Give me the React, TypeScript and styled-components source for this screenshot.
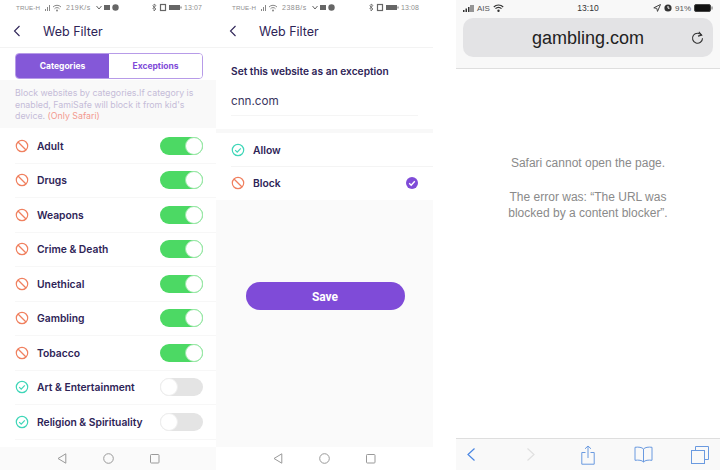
import React from "react";
import styled, { createGlobalStyle } from "styled-components";

const filters = [
  { name: "Adult", on: true },
  { name: "Drugs", on: true },
  { name: "Weapons", on: true },
  { name: "Crime & Death", on: true },
  { name: "Unethical", on: true },
  { name: "Gambling", on: true },
  { name: "Tobacco", on: true },
  { name: "Art & Entertainment", on: false },
  { name: "Religion & Spirituality", on: false },
];

const BlockIcon = () => (
  <svg width="14" height="14" viewBox="0 0 14 14" fill="none" stroke="#f0805f" strokeWidth="1.2">
    <circle cx="7" cy="7" r="5.7" />
    <path d="M3 3l8 8" />
  </svg>
);

const AllowIcon = () => (
  <svg width="14" height="14" viewBox="0 0 14 14" fill="none" stroke="#3fd6b8" strokeWidth="1.2">
    <circle cx="7" cy="7" r="5.7" />
    <path d="M4.2 7.2l2 2 3.6-3.8" />
  </svg>
);

const StatusBar = ({ speed, time }: { speed: string; time: string }) => (
  <Status>
    <span>TRUE-H</span>
    <svg width="17" height="8" viewBox="0 0 17 8" fill="#888">
      <path d="M0 7h1V5H0zM2 7h1V3H2zM4 7h1V1H4z" />
      <path d="M8 3a5.500 5.500 0 0 1 8 0M9.500 4.800a3.200 3.200 0 0 1 5 0" fill="none" stroke="#888" />
      <circle cx="12" cy="6.500" r="1" />
    </svg>
    <Speed>{speed}</Speed>
    <svg width="23" height="7" viewBox="0 0 23 7" fill="#666">
      <path d="M.5 2l2.500 3 2.500-3" fill="none" stroke="#666" />
      <rect x="8" y="1" width="6" height="5" />
      <circle cx="19.500" cy="3.500" r="3.200" />
    </svg>
    <StatusRight>
      <svg width="30" height="9" viewBox="0 0 30 9" fill="none" stroke="#666">
        <path d="M.5 2.500l3.500 3.500L2 8V1l2 1.500L.5 6" strokeWidth=".8" />
        <rect x="8.500" y="1.500" width="5" height="6" strokeWidth="1.200" />
        <rect x="17" y="2" width="11" height="5" fill="#666" stroke="none" />
        <rect x="28.500" y="3.500" width="1" height="2" fill="#666" stroke="none" />
      </svg>
      <span>{time}</span>
    </StatusRight>
  </Status>
);

const Header = () => (
  <HeaderBar>
    <svg width="8" height="12" viewBox="0 0 8 12" fill="none" stroke="#2e2457" strokeWidth="1.1">
      <path d="M6.500 1L1.500 6l5 5" />
    </svg>
    <Title>Web Filter</Title>
  </HeaderBar>
);

const AndroidNav = ({ tinted }: { tinted?: boolean }) => (
  <Nav $tinted={tinted}>
    <svg width="10" height="11" viewBox="0 0 10 11" fill="none" stroke="#999">
      <path d="M8.800 .8v9.400L1 5.500z" />
    </svg>
    <svg width="11" height="11" viewBox="0 0 11 11" fill="none" stroke="#999">
      <circle cx="5.500" cy="5.500" r="4.800" />
    </svg>
    <svg width="10" height="10" viewBox="0 0 10 10" fill="none" stroke="#999">
      <rect x=".5" y=".5" width="8.500" height="8.500" rx=".8" />
    </svg>
  </Nav>
);

export default function App() {
  return (
    <Page>
      <GlobalStyle />
      <Phone>
        <StatusBar speed="219K/s" time="13:07" />
        <Header />
        <Tabs>
          <Tab $active>Categories</Tab>
          <Tab>Exceptions</Tab>
        </Tabs>
        <Notice>
          Block websites by categories.If category is enabled, FamiSafe will block it from kid's
          device. <Red>(Only Safari)</Red>
        </Notice>
        <List>
          {filters.map((f) => (
            <FilterRow key={f.name}>
              {f.on ? <BlockIcon /> : <AllowIcon />}
              <RowLabel>{f.name}</RowLabel>
              <Switch $on={f.on}>
                <Knob $on={f.on} />
              </Switch>
            </FilterRow>
          ))}
        </List>
        <AndroidNav tinted />
      </Phone>

      <Phone $wide>
        <StatusBar speed="238B/s" time="13:08" />
        <Header />
        <FormTitle>Set this website as an exception</FormTitle>
        <Site>cnn.com</Site>
        <Band />
        <ChoiceRow>
          <AllowIcon />
          <RowLabel>Allow</RowLabel>
        </ChoiceRow>
        <ChoiceRow $last>
          <BlockIcon />
          <RowLabel>Block</RowLabel>
          <svg width="12" height="12" viewBox="0 0 12 12">
            <circle cx="6" cy="6" r="6" fill="#7f4bd8" />
            <path d="M3.200 6.200l2 2 3.600-4" fill="none" stroke="#fff" strokeWidth="1.400" />
          </svg>
        </ChoiceRow>
        <SaveArea>
          <SaveButton>Save</SaveButton>
        </SaveArea>
        <AndroidNav />
      </Phone>

      <Safari>
        <SafariTop>
          <IosStatus>
            <IosSide>
              <svg width="11" height="7" viewBox="0 0 11 7" fill="#333">
                <path d="M0 5h1.500v2H0zM2.500 3.500H4V7H2.500zM5 2h1.500v5H5zM7.500 0h1v7h-1zM9.500 0h1v7h-1z" />
              </svg>
              AIS
              <svg width="11" height="8" viewBox="0 0 11 8" fill="none" stroke="#333" strokeWidth="1.200">
                <path d="M.8 3a6.500 6.500 0 0 1 9.400 0M2.500 4.700a4 4 0 0 1 6 0" />
                <circle cx="5.500" cy="6.800" r=".6" fill="#333" />
              </svg>
            </IosSide>
            <IosTime>13:10</IosTime>
            <IosSide $right>
              <svg width="8" height="8" viewBox="0 0 8 8" fill="none" stroke="#444">
                <path d="M7.500.5L.8 3.800l3 .6.700 3z" />
              </svg>
              <svg width="8" height="8" viewBox="0 0 8 8">
                <circle cx="4" cy="4" r="3.600" fill="#333" />
                <path d="M4 2v2.200h1.500" stroke="#fff" fill="none" />
              </svg>
              91%
              <svg width="19" height="8" viewBox="0 0 19 8">
                <rect x=".5" y=".5" width="16" height="7" rx="1.500" fill="#111" stroke="#444" />
                <rect x="17.500" y="2.500" width="1" height="3" fill="#666" />
              </svg>
            </IosSide>
          </IosStatus>
          <UrlBar>
            <UrlText>gambling.com</UrlText>
            <Reload width="13" height="14" viewBox="0 0 13 14" fill="none" stroke="#333" strokeWidth="1.100">
              <path d="M10.500 4.200a5 5 0 1 0 1 3" />
              <path d="M7.800 .8l2.900 3.300-3.700 1" />
            </Reload>
          </UrlBar>
        </SafariTop>
        <ErrorArea>
          <p>Safari cannot open the page.</p>
          <p>
            The error was: “The URL was
            <br />
            blocked by a content blocker”.
          </p>
        </ErrorArea>
        <SafariBar>
          <svg width="10" height="15" viewBox="0 0 10 15" fill="none" stroke="#4a86e2" strokeWidth="1.200">
            <path d="M8.500 1.500L2 7.500l6.500 6" />
          </svg>
          <svg width="10" height="15" viewBox="0 0 10 15" fill="none" stroke="#e0e0e0" strokeWidth="1.200">
            <path d="M1.500 1.500l6.500 6-6.500 6" />
          </svg>
          <svg width="14" height="20" viewBox="0 0 14 20" fill="none" stroke="#6a9ae0">
            <path d="M4.500 7.500H.8v11.700h12.400V7.500H9.500M7 13V1M4 3.800L7 1l3 2.800" />
          </svg>
          <svg width="19" height="17" viewBox="0 0 19 17" fill="none" stroke="#6a9ae0">
            <path d="M9.500 3C8 1.300 4.500.8 1 1.300v13C4.500 13.800 8 14.200 9.500 16 11 14.200 14.500 13.800 18 14.300v-13C14.500.8 11 1.300 9.500 3zM9.500 3v13" />
          </svg>
          <svg width="18" height="18" viewBox="0 0 18 18" fill="none" stroke="#6a9ae0">
            <rect x=".5" y="4.500" width="13" height="13" />
            <path d="M4.500 4.500V.5h13v13h-4" />
          </svg>
        </SafariBar>
      </Safari>
    </Page>
  );
}

const GlobalStyle = createGlobalStyle`
  html, body {
    margin: 0;
    background: #fff;
  }
  body {
    font-family: Inter, "Noto Sans", sans-serif;
  }
`;

const Page = styled.div`
  display: flex;
  width: 720px;
  height: 470px;
  overflow: hidden;
  background: #fff;
`;

const Phone = styled.div<{ $wide?: boolean }>`
  display: flex;
  flex-direction: column;
  width: ${(p) => (p.$wide ? "217px" : "216px")};
  height: 470px;
  flex: none;
  background: #fff;
`;

const Status = styled.div`
  display: flex;
  align-items: center;
  gap: 5px;
  height: 15px;
  padding: 0 14px 0 16px;
  font-family: "Liberation Sans", sans-serif;
  font-size: 6.200px;
  letter-spacing: 0.1px;
  color: #8f8f8f;
`;

const Speed = styled.span`
  margin-left: -1px;
  font-size: 7px;
  letter-spacing: 0.5px;
`;

const StatusRight = styled.div`
  display: flex;
  align-items: center;
  gap: 2px;
  margin-left: auto;
  font-size: 7px;
`;

const HeaderBar = styled.div`
  display: flex;
  align-items: center;
  gap: 22px;
  height: 33px;
  box-sizing: border-box;
  padding-left: 13px;
  border-bottom: 1px solid #f3f3f3;
`;

const Title = styled.div`
  font-size: 12.500px;
  color: #2e2457;
`;

const Tabs = styled.div`
  display: flex;
  margin: 5px 13px 0 15px;
  height: 26px;
  box-sizing: border-box;
  border: 1px solid #b79be8;
  border-radius: 4px;
  overflow: hidden;
`;

const Tab = styled.div<{ $active?: boolean }>`
  flex: 1;
  display: flex;
  align-items: center;
  justify-content: center;
  font-size: 8.500px;
  font-weight: 700;
  color: ${(p) => (p.$active ? "#fff" : "#7f4bd8")};
  background: ${(p) => (p.$active ? "#8458d8" : "#fff")};
`;

const Notice = styled.div`
  height: 48px;
  margin-top: 1px;
  padding: 7px 12px 0 15px;
  box-sizing: border-box;
  background: #f9f9f9;
  font-size: 8.800px;
  line-height: 11.500px;
  color: #c5bcd8;
`;

const Red = styled.span`
  color: #f39a90;
`;

const List = styled.div`
  flex: 1;
  padding-top: 1px;
`;

const FilterRow = styled.div`
  display: flex;
  align-items: center;
  gap: 8px;
  height: 34.500px;
  margin-left: 15px;
  padding-right: 13px;
  border-bottom: 1px solid #f7f7f7;
  box-sizing: border-box;
`;

const RowLabel = styled.div`
  flex: 1;
  font-size: 10.300px;
  font-weight: 600;
  color: #2e2457;
`;

const Switch = styled.div<{ $on: boolean }>`
  position: relative;
  width: 43px;
  height: 18px;
  border-radius: 9px;
  background: ${(p) => (p.$on ? "#4cd964" : "#e4e4e4")};
`;

const Knob = styled.div<{ $on: boolean }>`
  position: absolute;
  top: 0;
  left: ${(p) => (p.$on ? "25px" : "0")};
  width: 18px;
  height: 18px;
  box-sizing: border-box;
  border-radius: 50%;
  background: #fff;
  border: 1px solid ${(p) => (p.$on ? "#9be8a8" : "#eee")};
`;

const Nav = styled.div<{ $tinted?: boolean }>`
  display: flex;
  align-items: center;
  gap: 36px;
  height: 23px;
  padding: 0 0 0 57px;
  background: ${(p) => (p.$tinted ? "#fafafa" : "#fff")};
  flex: none;
`;

const FormTitle = styled.div`
  margin: 16px 15px 0;
  font-size: 10.200px;
  line-height: 14px;
  font-weight: 600;
  color: #2e2457;
`;

const Site = styled.div`
  margin: 15.500px 15px 0;
  padding-bottom: 6.500px;
  border-bottom: 1px solid #f5f5f5;
  font-size: 11.700px;
  line-height: 15px;
  color: #3a3560;
`;

const Band = styled.div`
  height: 4px;
  margin-top: 13px;
  background: #f8f8f8;
`;

const ChoiceRow = styled.div<{ $last?: boolean }>`
  display: flex;
  align-items: center;
  gap: 8px;
  height: ${(p) => (p.$last ? "33px" : "34px")};
  box-sizing: border-box;
  margin-left: 15px;
  padding-right: 15px;
  border-bottom: 1px solid ${(p) => (p.$last ? "transparent" : "#f4f4f4")};
`;

const SaveArea = styled.div`
  flex: 1;
  background: #fafafa;
  padding: 82px 0 0 1px;
  display: flex;
  justify-content: center;
  align-items: flex-start;
`;

const SaveButton = styled.div`
  width: 159px;
  height: 28px;
  padding-top: 1px;
  box-sizing: border-box;
  border-radius: 14px;
  background: #7f4bd8;
  color: #fff;
  font-family: Roboto, sans-serif;
  font-size: 12px;
  font-weight: 700;
  display: flex;
  align-items: center;
  justify-content: center;
`;

const Safari = styled.div`
  display: flex;
  flex-direction: column;
  width: 264px;
  height: 470px;
  margin-left: 23px;
  flex: none;
  font-family: "Liberation Sans", sans-serif;
`;

const SafariTop = styled.div`
  height: 69px;
  box-sizing: border-box;
  padding: 0 7px;
  background: #f8f8f8;
  border-bottom: 1px solid #dedede;
  flex: none;
`;

const IosStatus = styled.div`
  display: flex;
  align-items: center;
  justify-content: space-between;
  height: 16px;
  font-size: 8px;
  color: #555;
`;

const IosSide = styled.div<{ $right?: boolean }>`
  display: flex;
  align-items: center;
  justify-content: ${(p) => (p.$right ? "flex-end" : "flex-start")};
  gap: 3px;
  width: 70px;
`;

const IosTime = styled.div`
  font-size: 8.500px;
  color: #333;
`;

const UrlBar = styled.div`
  position: relative;
  display: flex;
  align-items: center;
  justify-content: center;
  height: 39px;
  margin-top: 2px;
  padding-top: 2px;
  box-sizing: border-box;
  border-radius: 10px;
  background: #e3e3e5;
`;

const UrlText = styled.div`
  font-size: 18px;
  color: #222;
`;

const Reload = styled.svg`
  position: absolute;
  right: 9px;
  top: 13px;
`;

const ErrorArea = styled.div`
  flex: 1;
  padding-top: 86px;
  text-align: center;
  font-size: 12px;
  line-height: 16px;
  color: #8a8a8a;
  p {
    margin: 0 0 18px;
  }
`;

const SafariBar = styled.div`
  display: flex;
  align-items: center;
  height: 32px;
  box-sizing: border-box;
  padding: 0 0 0 10px;
  background: #f9f9f9;
  border-top: 1px solid #dedede;
  flex: none;
  svg:nth-child(2) {
    margin-left: 50px;
  }
  svg:nth-child(3) {
    margin-left: 45px;
  }
  svg:nth-child(4) {
    margin-left: 39px;
  }
  svg:nth-child(5) {
    margin-left: 38px;
  }
`;
